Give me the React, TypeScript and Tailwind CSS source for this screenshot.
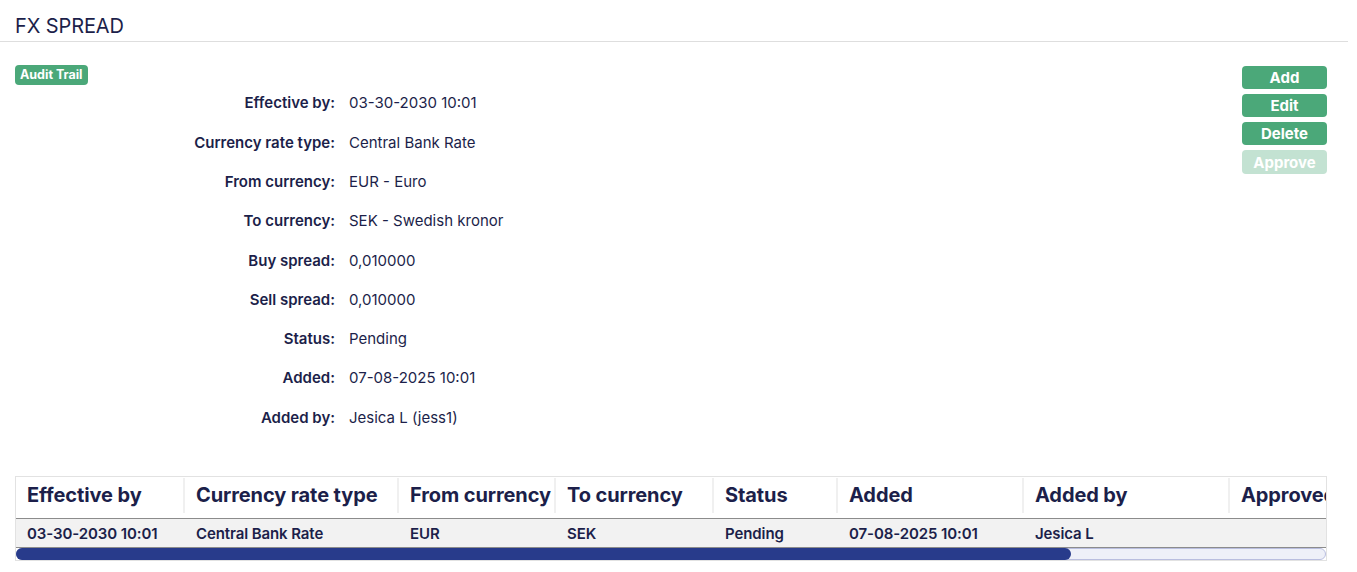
import React from 'react';

const details: [string, string][] = [
    ['Effective by:', '03-30-2030 10:01'],
    ['Currency rate type:', 'Central Bank Rate'],
    ['From currency:', 'EUR - Euro'],
    ['To currency:', 'SEK - Swedish kronor'],
    ['Buy spread:', '0,010000'],
    ['Sell spread:', '0,010000'],
    ['Status:', 'Pending'],
    ['Added:', '07-08-2025 10:01'],
    ['Added by:', 'Jesica L (jess1)'],
];

const columns = [
    {title: 'Effective by', w: 'w-[167px]', value: '03-30-2030 10:01'},
    {title: 'Currency rate type', w: 'w-[214px]', value: 'Central Bank Rate'},
    {title: 'From currency', w: 'w-[157px]', value: 'EUR'},
    {title: 'To currency', w: 'w-[158px]', value: 'SEK'},
    {title: 'Status', w: 'w-[124px]', value: 'Pending'},
    {title: 'Added', w: 'w-[186px]', value: '07-08-2025 10:01'},
    {title: 'Added by', w: 'w-[206px]', value: 'Jesica L'},
    {title: 'Approved by', w: 'w-[160px]', value: ''},
    {title: 'Approved', w: 'w-[160px]', value: ''},
];

function ActionButton({children, disabled}: {children: React.ReactNode, disabled?: boolean}) {
    return (
        <button
            className={
                disabled
                    ? 'w-[85px] h-[24px] rounded-[4px] bg-[#c3e2d2] text-white font-bold text-[15px] leading-none'
                    : 'w-[85px] h-[23px] rounded-[4px] bg-[#4ba879] text-white font-bold text-[15px] leading-none'
            }
        >
            {children}
        </button>
    );
}

export default function App() {
    return (
        <div className="min-h-[572px] bg-white text-[#1c1f4a] font-['Inter',sans-serif]">
            <header className="mr-[9px] h-[42px] border-b border-[#dedede] pl-[15px] pt-[14px]">
                <h1 className="text-[20px] leading-[24px] tracking-[-0.1px]">FX SPREAD</h1>
            </header>

            <div className="flex pl-[15px] pr-[30px] pt-[24px]">
                <div className="flex-1">
                    <span className="-mt-[1px] block w-max h-[20px] rounded-[4px] bg-[#4ba879] px-[5px] text-[12.5px] font-bold leading-[20px] text-white">
                        Audit Trail
                    </span>
                    <div className="-mt-[1px] flex flex-col">
                        {details.map(([label, value]) => (
                            <div key={label} className="flex h-[39.3px] items-center text-[15px]">
                                <div className="w-[320px] text-right font-semibold">{label}</div>
                                <div className="ml-[14px]">{value}</div>
                            </div>
                        ))}
                    </div>
                </div>
                <div className="flex flex-col gap-[5px]">
                    <ActionButton>Add</ActionButton>
                    <ActionButton>Edit</ActionButton>
                    <ActionButton>Delete</ActionButton>
                    <ActionButton disabled>Approve</ActionButton>
                </div>
            </div>

            <div className="ml-[15px] mt-[38px] w-[1312px] overflow-hidden border border-[#e2e2e2]">
                <div className="flex h-[42px] w-max items-start border-b border-[#8c8c8c] bg-white pt-[1px]">
                    {columns.map((c, i) => (
                        <div
                            key={c.title}
                            className={`${c.w} flex h-[35px] shrink-0 items-center whitespace-nowrap pl-[11px] text-[20px] font-bold tracking-[-0.1px] ${i > 0 ? 'border-l-2 border-[#f0f0f0]' : ''}`}
                        >
                            {c.title}
                        </div>
                    ))}
                </div>
                <div className="flex h-[29px] w-max items-center border-b border-[#8c8c8c] bg-[#f2f2f2] pt-[3px]">
                    {columns.map((c, i) => (
                        <div
                            key={c.title}
                            className={`${c.w} shrink-0 whitespace-nowrap pl-[11px] text-[15px] font-semibold tracking-[-0.1px] ${i > 0 ? 'border-l-2 border-transparent' : ''}`}
                        >
                            {c.value}
                        </div>
                    ))}
                </div>
                <div className="relative h-[12px] bg-white">
                    <div className="absolute inset-0 rounded-full border border-[#b9bedf] bg-[#eef0f8]" />
                    <div className="absolute left-0 top-0 h-[12px] w-[1055px] rounded-full bg-[#283b8b]" />
                </div>
            </div>
        </div>
    );
}
